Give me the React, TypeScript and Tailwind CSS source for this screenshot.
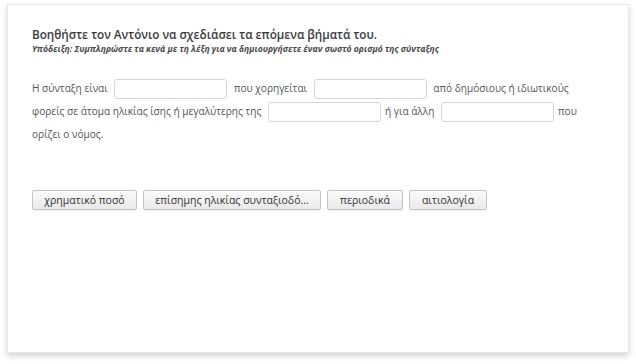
import React from "react";

const Blank = () => (
  <span className="inline-block align-middle mx-[4px] w-[113px] h-[20px] rounded-[3px] border border-[#d6d6d6] bg-white" />
);

const Btn = ({ children, w }: { children: React.ReactNode; w: string }) => (
  <button
    className={`h-[20px] ${w} rounded-[2px] border border-[#c4c4c4] bg-gradient-to-b from-[#fbfbfb] to-[#e9e9e9] text-[10.5px] text-[#333] leading-none shadow-[0_1px_0_rgba(0,0,0,0.05)]`}
    style={{ fontFamily: '"Open Sans", sans-serif' }}
  >
    {children}
  </button>
);

export default function App() {
  return (
    <div className="w-[636px] h-[364px] bg-white pt-[4px] pl-[7px]">
      <div className="w-[622px] h-[349px] bg-white border border-[#e8e8e8] shadow-[0_3px_6px_rgba(0,0,0,0.18)] pt-[21px] pl-[24px] pr-[25px]" style={{ fontFamily: '"Open Sans", sans-serif' }}>
        <div className="text-[11.7px] font-semibold text-[#3a3a3a] leading-[16px]">
          Βοηθήστε τον Αντόνιο να σχεδιάσει τα επόμενα βήματά του.
        </div>
        <div className="text-[8.6px] font-bold italic text-[#4a4a4a] leading-[12px] mt-[1px]">
          Υπόδειξη: Συμπληρώστε τα κενά με τη λέξη για να δημιουργήσετε έναν σωστό ορισμό της σύνταξης
        </div>
        <div className="mt-[22px] text-[10.1px] text-[#555] leading-[23px]">
          Η σύνταξη είναι <Blank /> που χορηγείται <Blank /> από δημόσιους ή ιδιωτικούς φορείς σε άτομα ηλικίας ίσης ή μεγαλύτερης της <Blank />ή για άλλη <Blank />που ορίζει ο νόμος.
        </div>
        <div className="mt-[44px] flex gap-[6px]">
          <Btn w="w-[105px]">χρηματικό ποσό</Btn>
          <Btn w="w-[178px]">επίσημης ηλικίας συνταξιοδό...</Btn>
          <Btn w="w-[76px]">περιοδικά</Btn>
          <Btn w="w-[78px]">αιτιολογία</Btn>
        </div>
      </div>
    </div>
  );
}
